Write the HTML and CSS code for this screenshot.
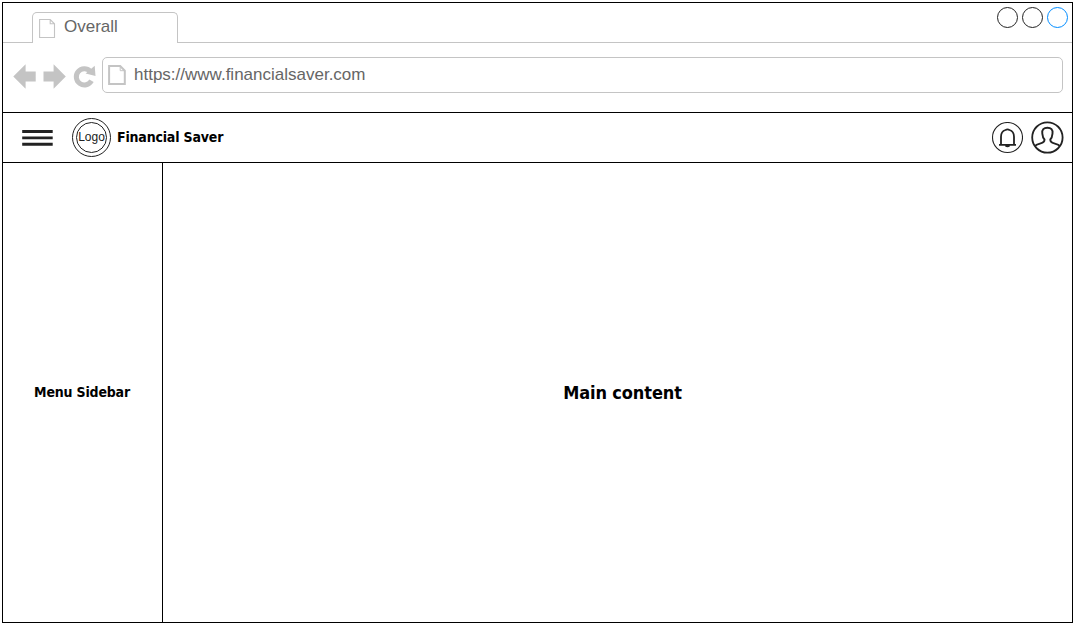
FILE: index.html
```html
<!DOCTYPE html>
<html lang="en">
<head>
<meta charset="utf-8">
<title>Financial Saver</title>
<link rel="stylesheet" href="styles.css">
</head>
<body>
<div class="browser">
  <div class="tabs">
    <div class="tab">
      <svg class="tab-icon" width="17" height="20" viewBox="0 0 17 20"><path d="M.6 .5H11.2L15.5 4.8V18.5H.6ZM11.2 .5V4.8H15.5"/></svg>
      <span class="tab-title">Overall</span>
    </div>
    <div class="controls"><i></i><i></i><i class="active"></i></div>
  </div>
  <div class="toolbar">
    <svg class="nav" width="84" height="26" viewBox="0 0 84 26">
      <path d="M.3 13.5 12.6 1.3V8.5H22.7V18.5H12.6V25.7Z"/>
      <path d="M52.8 13.5 40.6 1.3V8.5H30.5V18.5H40.6V25.7Z"/>
      <path d="M81.7 2.8 82.5 12.9 72.6 10.6Z"/>
      <path class="ring" d="M77.2 8.2A8.1 8.1 0 1 0 78.5 17.8"/>
    </svg>
    <div class="address">
      <svg class="page-icon" width="19" height="22" viewBox="0 0 19 22"><path d="M1.1 1.1H12.2L16.8 5.7V19.1H1.1Z"/><path class="fold" d="M12.2 1.1V5.7H16.8"/></svg>
      <span>https://www.financialsaver.com</span>
    </div>
  </div>
  <header class="header">
    <svg class="menu" width="31" height="17" viewBox="0 0 31 17"><path d="M.2 0H30.7V3H.2ZM.2 6.4H30.7V9.2H.2ZM.2 12.7H30.7V15.7H.2Z"/></svg>
    <div class="logo"><div class="logo-inner">Logo</div></div>
    <div class="brand">Financial Saver</div>
    <svg class="bell" width="32" height="32" viewBox="0 0 32 32">
      <circle cx="16.5" cy="15.5" r="15" stroke-width="1.1"/>
      <path d="M8 22.8H25M10 22.8V14.8C10 10.9 11.9 8.8 14.5 8Q16.5 6.8 18.5 8C21.1 8.8 23 10.9 23 14.8V22.8M14.5 23.6Q16.5 25 18.5 23.6" stroke-width="1.8"/>
    </svg>
    <svg class="user" width="34" height="34" viewBox="0 0 34 34">
      <circle cx="17.4" cy="16.5" r="15.2" stroke-width="1.8"/>
      <path d="M5 25C6 23.4 8.2 23 10.6 22.4C13.4 21.7 14.6 21 14.5 18.5C12.8 16.8 12.5 14.8 12.3 12.6C11.7 8.8 13.8 6.7 17.4 6.7S23.1 8.8 22.5 12.6C22.3 14.8 22 16.8 20.3 18.5C20.2 21 21.4 21.7 24.2 22.4C26.6 23 28.8 23.4 29.8 25" stroke-width="1.9"/>
    </svg>
  </header>
  <div class="content">
    <aside class="sidebar"><span>Menu Sidebar</span></aside>
    <main class="main"><span>Main content</span></main>
  </div>
</div>
</body>
</html>
```
FILE: styles.css
```css
* { box-sizing: border-box; }
body { margin: 2px; background: #fff; font-family: "Liberation Sans", Arial, sans-serif; }
svg { display: block; flex: none; }
.browser { width: 1071px; height: 621px; border: 1px solid #000; display: flex; flex-direction: column; }
.tabs {
  height: 40px; flex: none; display: flex; align-items: flex-end; justify-content: space-between;
  border-bottom: 1px solid #c4c4c4; padding-left: 29px;
}
.tab {
  width: 146px; height: 31px; margin-bottom: -1px; background: #fff; display: flex;
  border: 1px solid #c4c4c4; border-bottom: 0; border-radius: 5px 5px 0 0; padding: 6px 0 0 6px;
}
.tab-icon, .page-icon { fill: none; stroke: #c4c4c4; }
.tab-icon { stroke-width: 1.1; }
.page-icon { stroke-width: 2; }
.page-icon .fold { stroke-width: 1; }
.tab-title { font-size: 17px; line-height: 20px; color: #666; margin: -2px 0 0 8px; }
.controls { align-self: flex-start; display: flex; gap: 4px; padding: 4px 4px 0 0; }
.controls i { width: 21px; height: 21px; border: 1px solid #222; border-radius: 50%; }
.controls .active { border-color: #008cff; }
.toolbar { height: 69px; flex: none; display: flex; align-items: flex-start; padding: 14px 9px 0 10px; }
.nav { fill: #c4c4c4; margin-top: 6px; }
.nav .ring { fill: none; stroke: #c4c4c4; stroke-width: 5; }
.address {
  flex: 1; height: 36px; margin-left: 5px; border: 1px solid #c4c4c4; border-radius: 5px;
  display: flex; padding: 7px 0 0 5px; font-size: 17px; line-height: 20px; color: #666;
}
.address span { margin: 0 0 0 7px; }
.header {
  height: 51px; flex: none; display: flex; align-items: center; padding: 0 8px 0 19px;
  border-top: 1px solid #000; border-bottom: 1px solid #000;
}
.menu { fill: #222; margin-top: 1px; }
.logo, .logo-inner { border: 1px solid #222; border-radius: 50%; display: flex; align-items: center; justify-content: center; flex: none; }
.logo { width: 39px; height: 39px; margin-left: 19px; }
.logo-inner { width: 31px; height: 31px; padding-bottom: 2px; font-size: 12px; line-height: 14px; color: #222; }
.brand, .sidebar, .main { font-family: "DejaVu Sans Condensed", "DejaVu Sans", sans-serif; font-stretch: condensed; font-weight: 700; color: #000; }
.brand { margin: -2px 0 0 6px; font-size: 14px; line-height: 20px; letter-spacing: -.18px; }
.bell, .user { fill: none; stroke: #222; }
.bell { margin-left: auto; }
.user { margin-left: 7px; }
.content { flex: 1; display: flex; }
.sidebar { width: 160px; border-right: 1px solid #000; display: flex; align-items: center; justify-content: center; padding: 0 1px 1px 0; font-size: 14px; line-height: 20px; letter-spacing: -.18px; }
.main { flex: 1; display: flex; align-items: center; justify-content: center; padding: 1px 0 0 10px; font-size: 18px; line-height: 24px; letter-spacing: -.12px; }
```
